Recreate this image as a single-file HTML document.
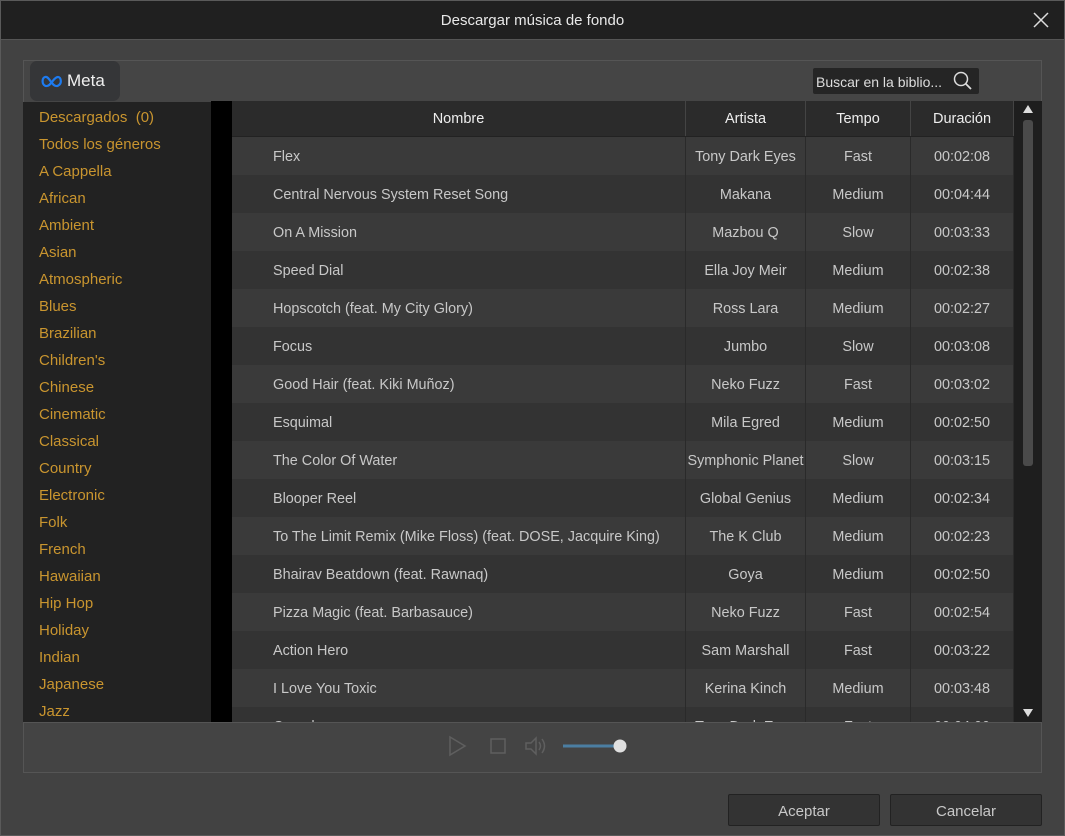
<!DOCTYPE html>
<html><head><meta charset="utf-8"><style>
*{margin:0;padding:0;box-sizing:border-box}
body{width:1065px;height:836px;background:#424242;font-family:"Liberation Sans",sans-serif;position:relative;overflow:hidden}
.a{position:absolute}
.frame{left:0;top:0;width:1065px;height:836px;border:1px solid #5a5a5a}
.title{left:0;top:0;width:1065px;height:40px;background:#202020;color:#e8e8e8;font-size:15px;text-align:center;line-height:42px;border-bottom:1px solid #555}
.genres{left:23px;top:102px;width:188px;height:620px;background:#222;overflow:hidden}
.genres div{color:#c9952f;font-size:15px;height:27px;line-height:31px;padding-left:16px}
.tbl{left:232px;top:101px;width:782px;height:621px;overflow:hidden;background:#333}
.row{display:flex;height:38px;line-height:41px;font-size:14.4px;color:#c8c8c8}
.row div{border-right:1px solid #2a2a2a;text-align:center;white-space:nowrap;overflow:hidden}
.row div:first-child{text-align:left;padding-left:41px}
.c1{width:454px}.c2{width:120px}.c3{width:105px}.c4{width:103px}
.hd{height:36px;line-height:37px;background:#2b2b2b;color:#eee;border-bottom:1px solid #222;font-size:14.5px}
.hd div{border-right:1px solid #444}
.hd div:first-child{text-align:center;padding-left:0}
.row:nth-child(even){background:#3a3a3a}
.row:nth-child(odd):not(.hd){background:#333}
.btn{top:794px;width:152px;height:32px;background:#333;border:1px solid #222;color:#c8c8c8;font-size:15px;text-align:center;line-height:33px;border-radius:2px}
</style></head><body>
<div class="a title">Descargar música de fondo</div>
<svg class="a" style="left:1033px;top:12px" width="16" height="16"><path d="M1 1L15 15M15 1L1 15" stroke="#ddd" stroke-width="1.5"/></svg>
<div class="a" style="left:23px;top:60px;width:1019px;height:713px;background:#454545;border:1px solid #555"></div>
<div class="a" style="left:30px;top:61px;width:90px;height:40px;background:#353638;border-radius:7px"></div>
<svg class="a" style="left:41px;top:74px" width="22" height="14" viewBox="0 0 22 14"><path d="M3 11C1 9 1 4 4 3C7 2 9 7 11 9C13 12 16 13 18 11C21 9 20 3 17 3C14 3 12 7 10 9C8 12 5 13 3 11Z" fill="none" stroke="#1d7bf0" stroke-width="2.2"/></svg>
<div class="a" style="left:67px;top:71px;color:#f0f0f0;font-size:17px">Meta</div>
<div class="a" style="left:813px;top:68px;width:166px;height:26px;background:#252525;border-radius:2px;color:#ddd;font-size:14px;line-height:28px;padding-left:3px">Buscar en la biblio...</div>
<svg class="a" style="left:953px;top:71px" width="20" height="20"><circle cx="8" cy="8" r="6.5" fill="none" stroke="#ddd" stroke-width="1.5"/><path d="M13 13L18 18" stroke="#ddd" stroke-width="1.8"/></svg>
<div class="a" style="left:211px;top:101px;width:21px;height:621px;background:#000"></div>
<div class="a genres">
<div>Descargados&nbsp; (0)</div><div>Todos los géneros</div><div>A Cappella</div><div>African</div><div>Ambient</div><div>Asian</div><div>Atmospheric</div><div>Blues</div><div>Brazilian</div><div>Children's</div><div>Chinese</div><div>Cinematic</div><div>Classical</div><div>Country</div><div>Electronic</div><div>Folk</div><div>French</div><div>Hawaiian</div><div>Hip Hop</div><div>Holiday</div><div>Indian</div><div>Japanese</div><div>Jazz</div><div>Latin</div>
</div>
<div class="a tbl">
<div class="row hd"><div class="c1">Nombre</div><div class="c2">Artista</div><div class="c3">Tempo</div><div class="c4">Duración</div></div>
<div class="row"><div class="c1">Flex</div><div class="c2">Tony Dark Eyes</div><div class="c3">Fast</div><div class="c4">00:02:08</div></div>
<div class="row"><div class="c1">Central Nervous System Reset Song</div><div class="c2">Makana</div><div class="c3">Medium</div><div class="c4">00:04:44</div></div>
<div class="row"><div class="c1">On A Mission</div><div class="c2">Mazbou Q</div><div class="c3">Slow</div><div class="c4">00:03:33</div></div>
<div class="row"><div class="c1">Speed Dial</div><div class="c2">Ella Joy Meir</div><div class="c3">Medium</div><div class="c4">00:02:38</div></div>
<div class="row"><div class="c1">Hopscotch (feat. My City Glory)</div><div class="c2">Ross Lara</div><div class="c3">Medium</div><div class="c4">00:02:27</div></div>
<div class="row"><div class="c1">Focus</div><div class="c2">Jumbo</div><div class="c3">Slow</div><div class="c4">00:03:08</div></div>
<div class="row"><div class="c1">Good Hair (feat. Kiki Muñoz)</div><div class="c2">Neko Fuzz</div><div class="c3">Fast</div><div class="c4">00:03:02</div></div>
<div class="row"><div class="c1">Esquimal</div><div class="c2">Mila Egred</div><div class="c3">Medium</div><div class="c4">00:02:50</div></div>
<div class="row"><div class="c1">The Color Of Water</div><div class="c2">Symphonic Planet</div><div class="c3">Slow</div><div class="c4">00:03:15</div></div>
<div class="row"><div class="c1">Blooper Reel</div><div class="c2">Global Genius</div><div class="c3">Medium</div><div class="c4">00:02:34</div></div>
<div class="row"><div class="c1">To The Limit Remix (Mike Floss) (feat. DOSE, Jacquire King)</div><div class="c2">The K Club</div><div class="c3">Medium</div><div class="c4">00:02:23</div></div>
<div class="row"><div class="c1">Bhairav Beatdown (feat. Rawnaq)</div><div class="c2">Goya</div><div class="c3">Medium</div><div class="c4">00:02:50</div></div>
<div class="row"><div class="c1">Pizza Magic (feat. Barbasauce)</div><div class="c2">Neko Fuzz</div><div class="c3">Fast</div><div class="c4">00:02:54</div></div>
<div class="row"><div class="c1">Action Hero</div><div class="c2">Sam Marshall</div><div class="c3">Fast</div><div class="c4">00:03:22</div></div>
<div class="row"><div class="c1">I Love You Toxic</div><div class="c2">Kerina Kinch</div><div class="c3">Medium</div><div class="c4">00:03:48</div></div>
<div class="row"><div class="c1">Crunch</div><div class="c2">Tony Dark Eyes</div><div class="c3">Fast</div><div class="c4">00:04:00</div></div>
</div>
<div class="a" style="left:1014px;top:101px;width:28px;height:621px;background:#1e1e1e"></div>
<div class="a" style="left:1023px;top:120px;width:10px;height:346px;background:#4a4a4a;border-radius:3px"></div>
<svg class="a" style="left:1022px;top:104px" width="12" height="10"><path d="M1 9L6 1L11 9Z" fill="#ddd"/></svg>
<svg class="a" style="left:1022px;top:708px" width="12" height="10"><path d="M1 1L6 9L11 1Z" fill="#ddd"/></svg>
<div class="a" style="left:23px;top:722px;width:1019px;height:51px;background:#444;border:1px solid #555"></div>
<svg class="a" style="left:448px;top:735px" width="200" height="24"><path d="M2 2L17 11L2 20Z" fill="none" stroke="#5f5f5f" stroke-width="1.5"/><rect x="43" y="4" width="14" height="14" fill="none" stroke="#5f5f5f" stroke-width="1.5"/><path d="M78 8H83L88 3V19L83 14H78Z" fill="none" stroke="#5f5f5f" stroke-width="1.5"/><path d="M91 7Q94 11 91 15M94 4Q99 11 94 18" fill="none" stroke="#5f5f5f" stroke-width="1.5"/><line x1="115" y1="11" x2="170" y2="11" stroke="#4b7ea2" stroke-width="3"/><circle cx="172" cy="11" r="6.5" fill="#e0e0e0"/></svg>
<div class="a btn" style="left:728px">Aceptar</div>
<div class="a btn" style="left:890px">Cancelar</div>
<div class="a frame"></div>
</body></html>
